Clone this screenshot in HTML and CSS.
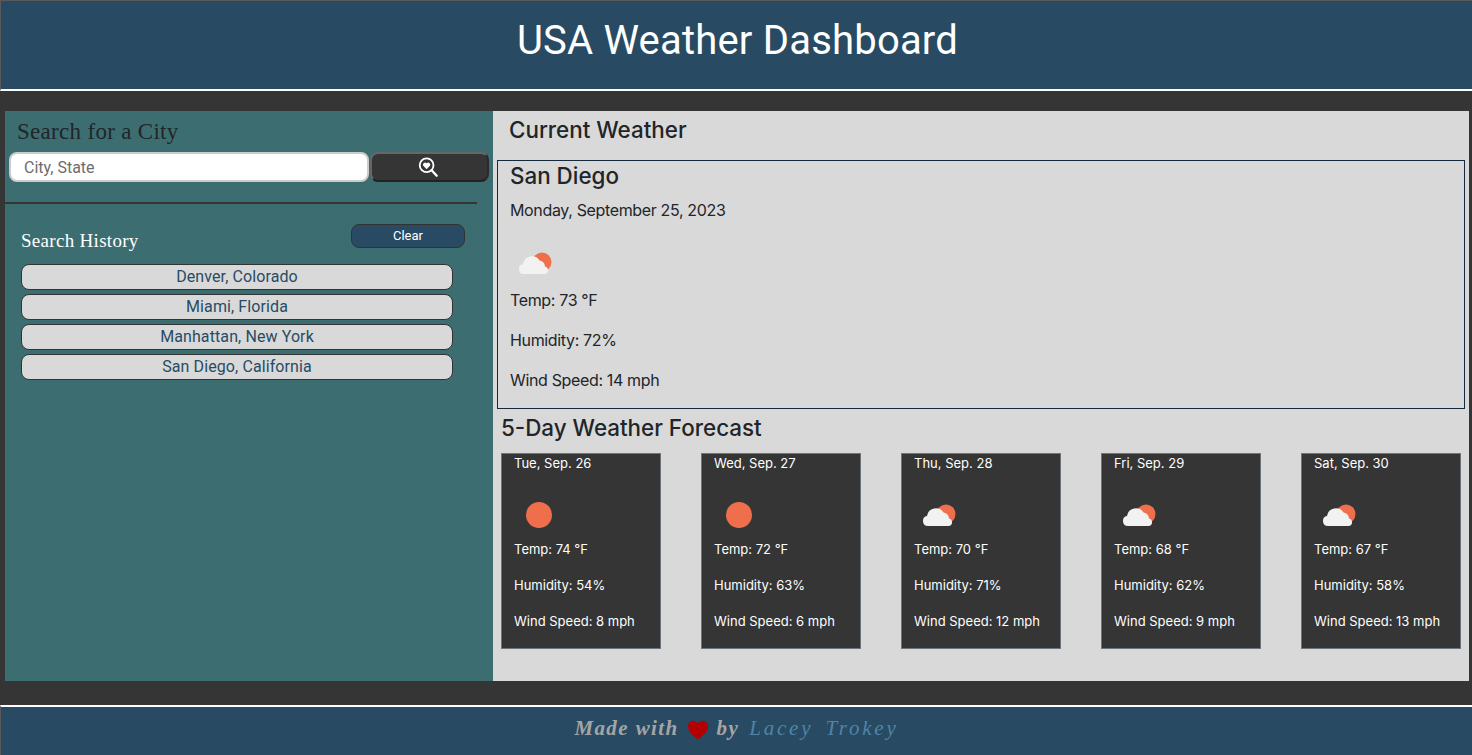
FILE: index.html
```html
<!DOCTYPE html>
<html lang="en">
<head>
  <meta charset="UTF-8">
  <title>USA Weather Dashboard</title>
  <link rel="stylesheet" href="styles.css">
</head>
<body>
  <svg class="icon-defs" width="0" height="0">
    <symbol id="clouds" viewBox="0 0 50 50">
      <circle cx="32" cy="24" r="9.500" fill="#ef6f4d"/>
      <path d="M14 36a5 5 0 0 1-1-9.900 9 9 0 0 1 16.600-3.600 6.500 6.500 0 0 1 5.400 5.900A3.900 3.900 0 0 1 35 36z" fill="#f2f2f2"/>
    </symbol>
    <symbol id="clear" viewBox="0 0 50 50">
      <circle cx="25" cy="25" r="13" fill="#ef6f4d"/>
    </symbol>
  </svg>

  <header class="site-header">
    <h1>USA Weather Dashboard</h1>
  </header>

  <main class="layout">
    <aside class="sidebar">
      <h2 class="search-title">Search for a City</h2>
      <form class="search-form">
        <input class="search-input" type="text" placeholder="City, State">
        <button class="search-btn" type="button" aria-label="Search">
          <svg width="22" height="22" viewBox="0 0 24 24">
            <circle cx="10.500" cy="10" r="7.500" fill="none" stroke="#fff" stroke-width="2"/>
            <path d="M16 15.500l5.500 6" stroke="#fff" stroke-width="2.600" stroke-linecap="round"/>
            <path d="M10.500 14.500L6.800 10.600a2.300 2.300 0 0 1 3.700-2.700 2.300 2.300 0 0 1 3.700 2.700z" fill="#fff"/>
          </svg>
        </button>
      </form>
      <hr class="divider">
      <div class="history-head">
        <h3 class="history-title">Search History</h3>
        <button class="clear-btn" type="button">Clear</button>
      </div>
      <ul class="history">
        <li><button type="button">Denver, Colorado</button></li>
        <li><button type="button">Miami, Florida</button></li>
        <li><button type="button">Manhattan, New York</button></li>
        <li><button type="button">San Diego, California</button></li>
      </ul>
    </aside>

    <section class="weather">
      <h2 class="current-title">Current Weather</h2>
      <div class="current">
        <h3>San Diego</h3>
        <p>Monday, September 25, 2023</p>
        <svg class="weather-icon"><use href="#clouds"/></svg>
        <p>Temp: 73 °F</p>
        <p>Humidity: 72%</p>
        <p>Wind Speed: 14 mph</p>
      </div>
      <h2 class="forecast-title">5-Day Weather Forecast</h2>
      <div class="forecast">
        <div class="day">
          <p>Tue, Sep. 26</p>
          <svg class="weather-icon"><use href="#clear"/></svg>
          <p>Temp: 74 °F</p>
          <p>Humidity: 54%</p>
          <p>Wind Speed: 8 mph</p>
        </div>
        <div class="day">
          <p>Wed, Sep. 27</p>
          <svg class="weather-icon"><use href="#clear"/></svg>
          <p>Temp: 72 °F</p>
          <p>Humidity: 63%</p>
          <p>Wind Speed: 6 mph</p>
        </div>
        <div class="day">
          <p>Thu, Sep. 28</p>
          <svg class="weather-icon"><use href="#clouds"/></svg>
          <p>Temp: 70 °F</p>
          <p>Humidity: 71%</p>
          <p>Wind Speed: 12 mph</p>
        </div>
        <div class="day">
          <p>Fri, Sep. 29</p>
          <svg class="weather-icon"><use href="#clouds"/></svg>
          <p>Temp: 68 °F</p>
          <p>Humidity: 62%</p>
          <p>Wind Speed: 9 mph</p>
        </div>
        <div class="day">
          <p>Sat, Sep. 30</p>
          <svg class="weather-icon"><use href="#clouds"/></svg>
          <p>Temp: 67 °F</p>
          <p>Humidity: 58%</p>
          <p>Wind Speed: 13 mph</p>
        </div>
      </div>
    </section>
  </main>

  <footer class="site-footer">
    <span class="made">Made with</span>
    <svg class="heart" width="22" height="20" viewBox="0 0 22 20">
      <path d="M11 19.500C6 15.500 1 12 1 6.500 1 3 3.500 .8 6.300 .8 8.300 .8 10 1.800 11 3.500 12 1.800 13.700 .8 15.700 .8 18.500 .8 21 3 21 6.500 21 12 16 15.500 11 19.500z" fill="#b30000"/>
    </svg>
    <span class="made">by</span>
    <span class="author">Lacey Trokey</span>
  </footer>
</body>
</html>
```
FILE: styles.css
```css
* {
  box-sizing: border-box;
}
body {
  margin: 0;
  height: 755px;
  overflow: hidden;
  background: #353535;
  color: #212529;
  font-family: Inter, sans-serif;
  font-size: 16px;
  line-height: 24px;
}
h1, h2, h3, p, ul {
  margin: 0;
  padding: 0;
}
button, input {
  font-family: Roboto, sans-serif;
}
.icon-defs {
  position: absolute;
}

.site-header {
  height: 91px;
  padding: 16px 0 0 2px;
  background: #284b63;
  border-top: 1px solid #5a5a5a;
  border-left: 1px solid #5a5a5a;
  border-bottom: 2px solid #fff;
  text-align: center;
}
.site-header h1 {
  color: #fff;
  font-family: Roboto, sans-serif;
  font-size: 40px;
  font-weight: 400;
  line-height: 48px;
  letter-spacing: .2px;
}

.layout {
  display: flex;
  height: 570px;
  margin: 20px 3px 0 5px;
}
.sidebar {
  flex: 0 0 488px;
  background: #3c6e71;
}
.search-title {
  padding: 7px 0 0 12px;
  font-family: "Liberation Serif", serif;
  font-size: 23px;
  font-weight: 400;
  line-height: 28px;
  letter-spacing: .3px;
}
.search-form {
  display: flex;
  gap: 1px;
  margin: 6px 4px 0;
}
.search-input {
  width: 360px;
  height: 30px;
  padding: 0 13px;
  border: 2px solid #ccc;
  border-radius: 8px;
  background: #fff;
  font-size: 16px;
}
.search-input::placeholder {
  color: #6c6c6c;
}
.search-btn {
  display: flex;
  align-items: center;
  justify-content: center;
  width: 119px;
  height: 30px;
  padding: 0 3px 0 0;
  border: 2px solid;
  border-color: #666 #2a2a2a #222 #666;
  border-radius: 8px;
  background: #353535;
}
.divider {
  width: 472px;
  height: 2px;
  margin: 20px 0 0;
  border: 0;
  background: #353535;
}
.history-head {
  display: flex;
  justify-content: space-between;
  padding: 20px 28px 0 16px;
}
.history-title {
  padding-top: 5px;
  color: #fff;
  font-family: "Liberation Serif", serif;
  font-size: 19px;
  font-weight: 400;
  line-height: 24px;
  letter-spacing: .3px;
}
.clear-btn {
  width: 114px;
  height: 24px;
  padding: 0 0 2px;
  border: 1px solid #333;
  border-radius: 8px;
  background: #284b63;
  color: #fff;
  font-size: 13px;
}
.history {
  list-style: none;
  margin: 11px 0 0 16px;
}
.history button {
  display: block;
  width: 432px;
  height: 26px;
  margin-bottom: 4px;
  padding: 0 0 1px;
  border: 1px solid #333;
  border-radius: 8px;
  background: #d9d9d9;
  color: #284b63;
  font-size: 16px;
  letter-spacing: .1px;
}

.weather {
  flex: 1;
  padding: 4px 4px 0;
  background: #d9d9d9;
}
.current-title {
  padding-left: 12px;
  font-size: 22.4px;
  font-weight: 500;
  line-height: 29px;
}
.current {
  margin-top: 16px;
  padding: 0 12px;
  border: 1px solid #14293d;
  letter-spacing: -.35px;
}
.current h3 {
  margin-bottom: 8px;
  font-size: 22.4px;
  font-weight: 500;
  line-height: 29px;
  letter-spacing: 0;
}
.current p {
  margin-bottom: 16px;
}
.weather-icon {
  display: block;
  width: 50px;
  height: 50px;
}
.forecast-title {
  margin-top: 4px;
  padding-left: 4px;
  font-size: 22.4px;
  font-weight: 500;
  line-height: 29px;
}
.forecast {
  display: flex;
  justify-content: space-between;
  margin: 11px 4px 0;
}
.day {
  width: 160px;
  height: 196px;
  padding: 0 12px;
  border: 1px solid #6c757d;
  background: #353535;
  color: #fff;
  font-size: 13px;
  line-height: 19px;
}
.day p {
  margin-bottom: 17px;
}

.site-footer {
  display: flex;
  align-items: center;
  justify-content: center;
  gap: 8px;
  height: 50px;
  margin-top: 24px;
  padding: 0 0 6px;
  background: #284b63;
  border-top: 2px solid #fff;
  border-left: 1px solid #5a5a5a;
  font-family: "Liberation Serif", serif;
  font-size: 21px;
  font-style: italic;
}
.made {
  color: #a5a5a5;
  font-weight: 700;
  letter-spacing: 1.4px;
}
.heart {
  margin-top: 3px;
}
.author {
  margin-left: 2px;
  color: #4f84a8;
  word-spacing: 4px;
  letter-spacing: 2.8px;
}
```
